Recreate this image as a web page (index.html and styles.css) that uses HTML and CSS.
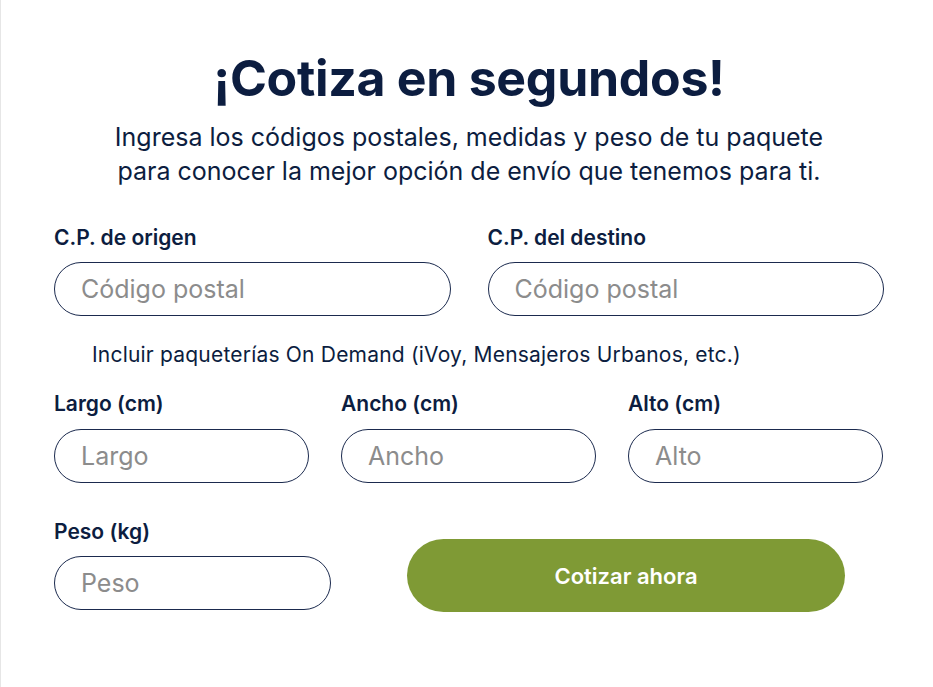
FILE: index.html
```html
<!DOCTYPE html>
<html lang="es">
<head>
    <meta charset="UTF-8">
    <meta name="viewport" content="width=device-width, initial-scale=1.0">
    <title>Cotiza en segundos</title>
    <link rel="stylesheet" href="styles.css">
</head>
<body>
    <div class="page">
        <h1>¡Cotiza en segundos!</h1>
        <p class="intro">Ingresa los códigos postales, medidas y peso de tu paquete<br>para conocer la mejor opción de envío que tenemos para ti.</p>

        <form class="quote-form">
            <div class="row two">
                <div class="field">
                    <label for="cp-origen">C.P. de origen</label>
                    <input type="text" id="cp-origen" placeholder="Código postal">
                </div>
                <div class="field">
                    <label for="cp-destino">C.P. del destino</label>
                    <input type="text" id="cp-destino" placeholder="Código postal">
                </div>
            </div>

            <p class="on-demand">Incluir paqueterías On Demand (iVoy, Mensajeros Urbanos, etc.)</p>

            <div class="row three">
                <div class="field">
                    <label for="largo">Largo (cm)</label>
                    <input type="text" id="largo" placeholder="Largo">
                </div>
                <div class="field">
                    <label for="ancho">Ancho (cm)</label>
                    <input type="text" id="ancho" placeholder="Ancho">
                </div>
                <div class="field">
                    <label for="alto">Alto (cm)</label>
                    <input type="text" id="alto" placeholder="Alto">
                </div>
            </div>

            <div class="row last">
                <div class="field peso">
                    <label for="peso">Peso (kg)</label>
                    <input type="text" id="peso" placeholder="Peso">
                </div>
                <button type="button" class="submit">Cotizar ahora</button>
            </div>
        </form>
    </div>
</body>
</html>
```

FILE: styles.css
```css
body {
    margin: 0;
    font-family: Inter, "Noto Sans", sans-serif;
    color: #0c1d40;
    background-color: #fff;
}
.page {
    min-height: 687px;
    box-sizing: border-box;
    border-left: 1px solid #e6e6e6;
    padding: 48px 0 0 53px;
}
h1 {
    width: 830px;
    margin: 0;
    text-align: center;
    font-size: 50px;
    font-weight: 700;
    letter-spacing: -0.3px;
    line-height: 60px;
}
.intro {
    width: 830px;
    margin: 12px 0 0;
    text-align: center;
    font-size: 25px;
    line-height: 34px;
}
.quote-form {
    width: 830px;
    margin-top: 37px;
}
.row {
    display: flex;
}
.row.two {
    gap: 37px;
}
.row.two .field {
    width: 397px;
}
.row.three {
    gap: 32px;
}
.row.three .field {
    width: 255px;
}
.field label {
    display: block;
    font-size: 21px;
    font-weight: 600;
    line-height: 26px;
    margin-bottom: 11px;
}
.row.three .field label {
    margin-bottom: 12px;
}
.field input {
    display: block;
    width: 100%;
    height: 54px;
    box-sizing: border-box;
    border: 1.5px solid #1b2a4e;
    border-radius: 27px;
    padding: 0 26px;
    font-family: Inter, sans-serif;
    font-size: 25px;
    color: #0c1d40;
    background: #fff;
    outline: none;
}
.field input::placeholder {
    color: #8c8c8c;
}
.on-demand {
    margin: 25px 0 22px 38px;
    font-size: 21px;
    letter-spacing: 0.2px;
    line-height: 28px;
}
.row.last {
    margin-top: 36px;
    align-items: flex-end;
}
.field.peso {
    width: 277px;
}
.submit {
    width: 438px;
    height: 73px;
    margin: 0 0 -2px 76px;
    border: none;
    border-radius: 37px;
    background-color: #7f9a35;
    color: #fff;
    font-family: Inter, sans-serif;
    font-size: 22px;
    font-weight: 600;
    cursor: pointer;
}
```
